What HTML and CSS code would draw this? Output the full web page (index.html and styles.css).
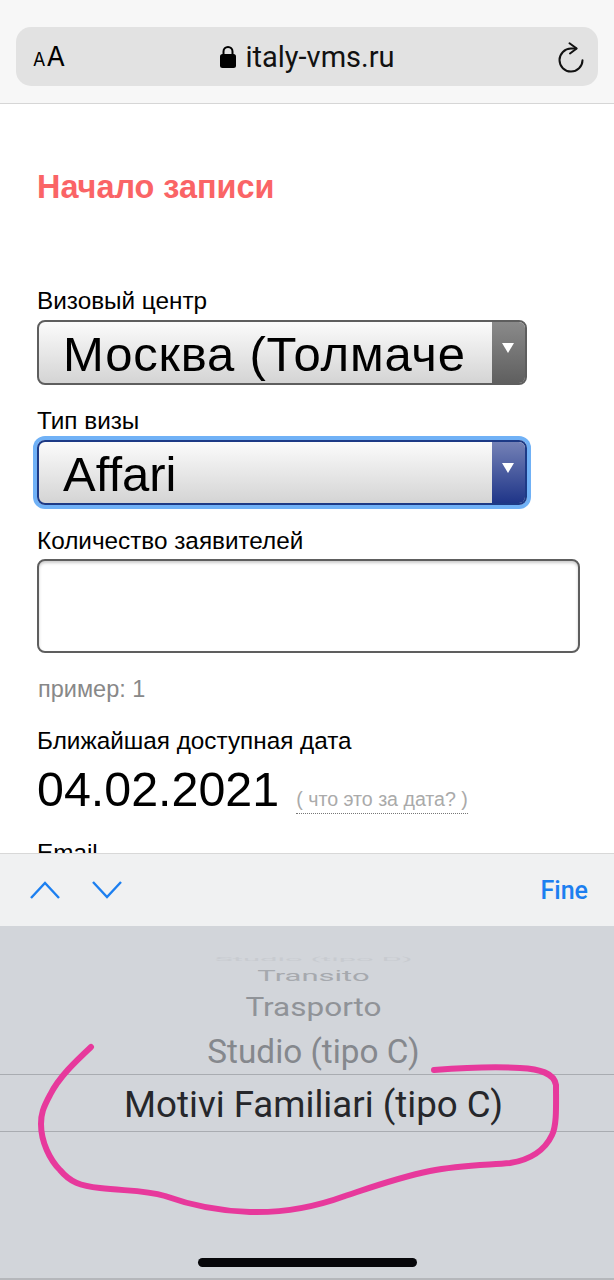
FILE: index.html
```html
<!DOCTYPE html>
<html lang="en">

<head>
  <meta charset="UTF-8">
  <meta name="viewport" content="width=device-width, initial-scale=1.0">
  <title>italy-vms.ru</title>
  <link rel="stylesheet" href="styles.css">
</head>

<body>
  <div class="phone">

    <header class="toolbar">
      <div class="address">
        <span class="text-size"><small>A</small>A</span>
        <span class="url">
          <svg class="lock" width="16" height="22" viewBox="0 0 16 22">
            <path d="M3.5 9V5.5a4.5 4.5 0 0 1 9 0V9" fill="none" stroke="#000" stroke-width="2" />
            <rect x="0" y="8" width="16" height="14" rx="2.5" fill="#000" />
          </svg>
          italy-vms.ru
        </span>
        <svg class="reload" width="28" height="34" viewBox="0 0 28 34">
          <path d="M19 8.6H14A11.5 11.5 0 1 0 25.5 20.2" fill="none" stroke="#111" stroke-width="2" stroke-linecap="round" />
          <path d="M12.5 3.3l7.2 5.2l-6.7 5" fill="none" stroke="#111" stroke-width="2" stroke-linecap="round" stroke-linejoin="round" />
        </svg>
      </div>
    </header>

    <main class="page">
      <h1 class="title">Начало записи</h1>

      <label class="field-label">Визовый центр</label>
      <div class="select">
        <span class="select-value select-value-city">Москва (Толмаче</span>
        <span class="select-arrow"></span>
      </div>

      <label class="field-label">Тип визы</label>
      <div class="select select-focus">
        <span class="select-value">Affari</span>
        <span class="select-arrow"></span>
      </div>

      <label class="field-label">Количество заявителей</label>
      <div class="text-input"></div>
      <p class="hint">пример: 1</p>

      <label class="field-label">Ближайшая доступная дата</label>
      <div class="date-row">
        <span class="date">04.02.2021</span>
        <span class="date-help">( что это за дата? )</span>
      </div>

      <label class="field-label email-label">Email</label>
    </main>

    <div class="accessory">
      <svg class="chevron" width="32" height="20" viewBox="0 0 32 20">
        <path d="M2 18L16 3l14 15" fill="none" stroke="#1c7ff0" stroke-width="2.4" />
      </svg>
      <svg class="chevron" width="32" height="20" viewBox="0 0 32 20">
        <path d="M2 2l14 15L30 2" fill="none" stroke="#1c7ff0" stroke-width="2.4" />
      </svg>
      <span class="done">Fine</span>
    </div>

    <section class="picker">
      <div class="wheel">
        <span class="wheel-item item-far">Studio (tipo D)</span>
        <span class="wheel-item item-transit">Transito</span>
        <span class="wheel-item item-near">Trasporto</span>
        <span class="wheel-item item-prev">Studio (tipo C)</span>
        <span class="wheel-item item-selected">Motivi Familiari (tipo C)</span>
      </div>
      <div class="home-bar"></div>

      <!-- hand drawn mark on top of the screenshot -->
      <svg class="scribble" width="614" height="354" viewBox="0 926 614 354">
        <path d="M91 1047C75 1062 59 1077 50 1095C43 1108 41 1114 41 1124C41 1142 50 1160 60 1170C70 1182 80 1186 100 1188C125 1191 145 1190 165 1196C190 1205 215 1211 250 1212C285 1213 315 1207 345 1196C375 1186 400 1177 430 1171C460 1165 490 1165 510 1163C530 1160 545 1150 552 1135C557 1125 556 1105 556 1085C554 1073 540 1069 520 1068C490 1066 460 1068 434 1070" fill="none" stroke="#e7399c" stroke-width="6" stroke-linecap="round" />
      </svg>
    </section>

  </div>
</body>

</html>
```

FILE: styles.css
```css
* {
  box-sizing: border-box;
}

body {
  margin: 0;
  font-family: "Liberation Sans", Arial, sans-serif;
  color: #000;
  background: #fff;
}

.phone {
  display: flex;
  flex-direction: column;
  width: 614px;
  height: 1280px;
  overflow: hidden;
}

/* safari address bar */
.toolbar {
  height: 104px;
  flex: none;
  padding: 27px 16px 0;
  background: #f7f7f7;
  border-bottom: 1px solid #d6d6d6;
}

.address {
  display: grid;
  grid-template-columns: 1fr auto 1fr;
  align-items: center;
  height: 59px;
  padding: 0 13px 0 17px;
  background: #e2e2e2;
  border-radius: 15px;
}

.text-size {
  font-family: Inter, sans-serif;
  font-size: 27px;
  letter-spacing: 1px;
}

.text-size small {
  font-size: 18px;
}

.url {
  display: flex;
  align-items: center;
  gap: 9px;
  margin-right: 3px;
  font-family: Roboto, sans-serif;
  font-size: 29px;
  color: #111;
}

.reload {
  display: block;
  justify-self: end;
}

/* page */
.page {
  flex: 1;
  min-height: 0;
  overflow: hidden;
  padding: 0 35px 0 37px;
}

.title {
  margin: 65px 0 83px;
  font-size: 32.4px;
  line-height: 36px;
  font-weight: bold;
  color: #fa6466;
}

.field-label {
  display: block;
  font-size: 24.3px;
  line-height: 25px;
}

.select {
  display: flex;
  width: 490px;
  height: 65px;
  margin: 7px 0 23px;
  border: 2px solid #5e5e5e;
  border-radius: 8px;
  background: linear-gradient(#fbfbfb, #d4d4d4);
  overflow: hidden;
}

.select-focus {
  border-color: #1d3a86;
  box-shadow: 0 0 0 4px #70b1f6;
  overflow: visible;
}

.select-value {
  flex: 1;
  overflow: hidden;
  padding-left: 24px;
  font-size: 49px;
  line-height: 64px;
  white-space: nowrap;
}

.select-value-city {
  letter-spacing: 0.8px;
}

.select-arrow {
  position: relative;
  width: 33px;
  flex: none;
  background: linear-gradient(#8a8a8a, #5f5f5f);
}

.select-focus .select-arrow {
  border-radius: 0 6px 6px 0;
  background: linear-gradient(#7481b6, #1f3588);
}

.select-arrow::after {
  content: "";
  position: absolute;
  top: 21px;
  left: 10px;
  border-left: 6px solid transparent;
  border-right: 6px solid transparent;
  border-top: 10px solid #fff;
}

.text-input {
  width: 543px;
  height: 94px;
  margin-top: 6px;
  border: 2px solid #5e5e5e;
  border-radius: 8px;
  box-shadow: inset 0 2px 3px #ccc;
}

.hint {
  margin: 24px 0 26px 1px;
  font-size: 23.5px;
  line-height: 25px;
  color: #888;
}

.date-row {
  display: flex;
  align-items: baseline;
  gap: 17px;
  margin-top: 7px;
}

.date {
  font-size: 48.4px;
  line-height: 58px;
}

.date-help {
  padding-bottom: 2px;
  font-size: 19.6px;
  color: #aaa;
  border-bottom: 1px dotted #777;
}

.email-label {
  margin-top: 22px;
}

/* keyboard accessory */
.accessory {
  display: flex;
  align-items: center;
  gap: 30px;
  height: 73px;
  flex: none;
  padding: 0 26px 0 29px;
  background: #f0f1f2;
  border-top: 1px solid #d8d8d8;
}

.done {
  margin-left: auto;
  font-family: Roboto, sans-serif;
  font-size: 25px;
  font-weight: 500;
  color: #1c7ff0;
}

/* picker wheel */
.picker {
  position: relative;
  display: flex;
  flex-direction: column;
  height: 354px;
  flex: none;
  background: #d2d5da;
  border-bottom: 2px solid #b5b7bb;
}

.wheel {
  display: flex;
  flex-direction: column;
  align-items: center;
  height: 205px;
  padding-top: 29px;
  font-family: Roboto, sans-serif;
}

.wheel-item {
  display: block;
  margin-left: 13px;
  white-space: nowrap;
}

.item-far {
  height: 8px;
  line-height: 8px;
  font-size: 31px;
  color: #c8cbd0;
  transform: scaleY(0.2);
}

.item-transit {
  height: 22px;
  margin-top: 2px;
  line-height: 22px;
  font-size: 31px;
  color: #a6a9ae;
  transform: scaleY(0.5);
}

.item-near {
  height: 30px;
  margin-top: 6px;
  line-height: 30px;
  font-size: 31.5px;
  color: #909398;
  transform: scaleY(0.8);
}

.item-prev {
  height: 40px;
  margin-top: 9px;
  line-height: 40px;
  font-size: 33.3px;
  color: #85888d;
}

.item-selected {
  width: 100%;
  height: 58px;
  margin: 2px 0 0;
  padding-left: 13px;
  line-height: 59px;
  text-align: center;
  font-size: 36.7px;
  color: #26272b;
  border-top: 1px solid #a9acb1;
  border-bottom: 1px solid #a9acb1;
}

.home-bar {
  width: 219px;
  height: 9px;
  margin: 127px auto 0;
  border-radius: 5px;
  background: #07070a;
}

.scribble {
  position: absolute;
  top: 0;
  left: 0;
  pointer-events: none;
}
```
